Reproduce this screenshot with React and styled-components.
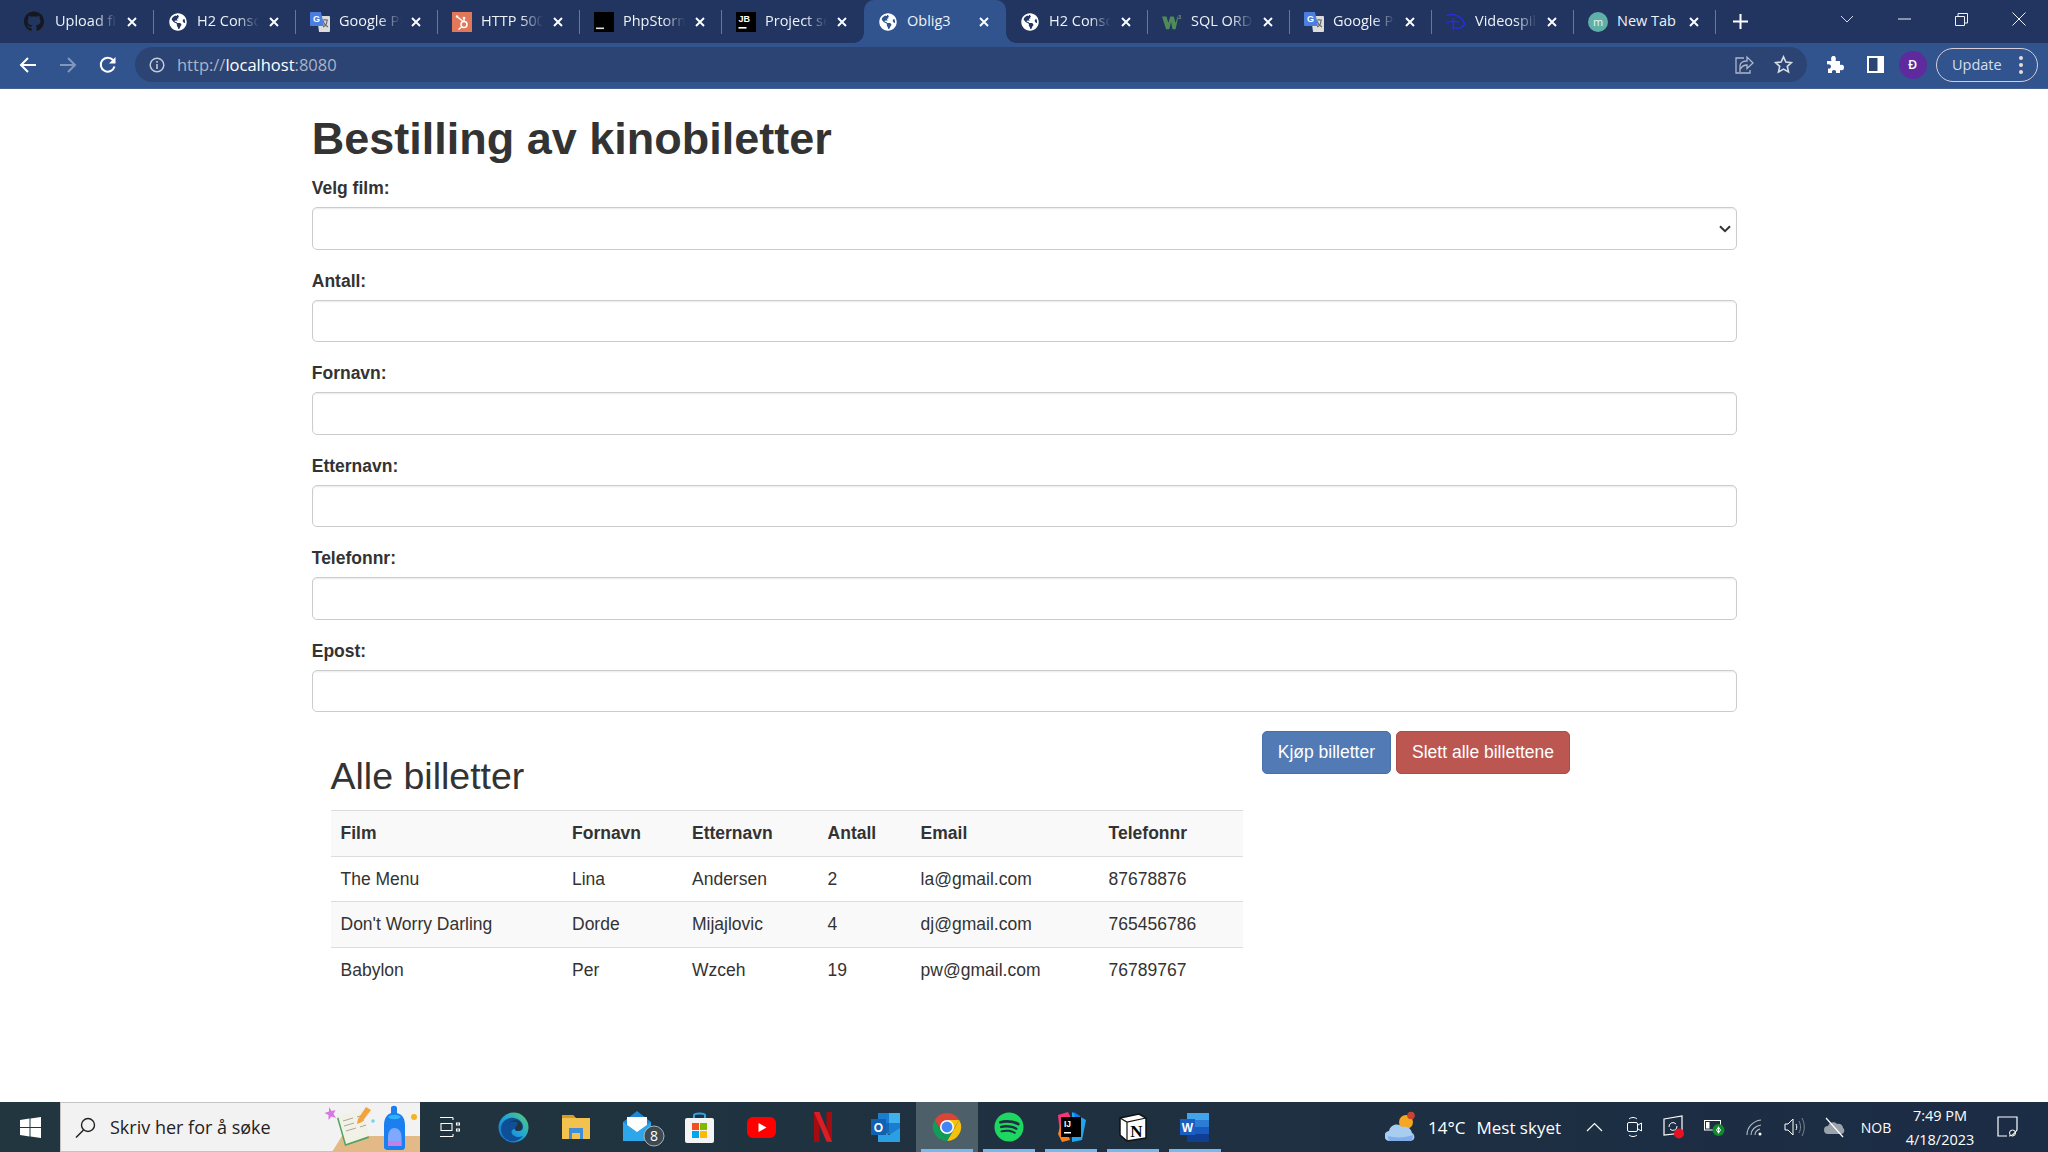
import React from "react";
import styled, { createGlobalStyle } from "styled-components";
import { FaGithub, FaGlobeAmericas, FaSpotify } from "react-icons/fa";

const GlobalStyle = createGlobalStyle`
  html, body {
    margin: 0;
    padding: 0;
    height: 100%;
    background: #fff;
  }
  * {
    box-sizing: border-box;
  }
`;

const uiFont = `"Open Sans", "Noto Sans", sans-serif`;
const pageFont = `"Liberation Sans", Arial, sans-serif`;

const Screen = styled.div`
  width: 2048px;
  height: 1152px;
  display: flex;
  flex-direction: column;
  overflow: hidden;
`;

/* browser chrome */
const TabStrip = styled.div`
  height: 43px;
  flex: none;
  background: #213560;
  display: flex;
  padding-left: 12px;
  font-family: ${uiFont};
`;

const TabItem = styled.div`
  position: relative;
  flex: none;
  width: 142px;
  height: 43px;
  display: flex;
  align-items: center;
  padding: 0 17px 0 ${props => (props.first ? 12 : 14)}px;
  border-radius: 10px 10px 0 0;
  background: ${props => (props.active ? "#31548f" : "transparent")};
  &::after {
    content: "";
    display: ${props => (props.noSep ? "none" : "block")};
    position: absolute;
    right: 0;
    top: 10px;
    height: 24px;
    width: 1px;
    background: #66789c;
  }
`;

const Flare = styled.span`
  position: absolute;
  bottom: 0;
  width: 10px;
  height: 10px;
  ${props => (props.left ? "left: -10px;" : "right: -10px;")}
  background: radial-gradient(circle at ${props => (props.left ? "0 0" : "100% 0")}, transparent 9.5px, #31548f 10px);
`;

const TabIcon = styled.span`
  flex: none;
  width: 20px;
  height: 20px;
  display: flex;
  align-items: center;
  justify-content: center;
  color: #fff;
`;

const TabTitle = styled.span`
  flex: 1;
  min-width: 0;
  margin: 0 10px 2px ${props => (props.first ? 11 : 9)}px;
  font-size: 14.5px;
  color: #eef2f8;
  white-space: nowrap;
  overflow: hidden;
  mask-image: ${props => (props.fade ? "linear-gradient(to right, #000 65%, transparent 100%)" : "none")};
`;

const NewTabButton = styled.div`
  width: 48px;
  display: flex;
  align-items: center;
  justify-content: center;
`;

const WindowControls = styled.div`
  margin-left: auto;
  display: flex;
  align-items: flex-start;
`;

const WindowButton = styled.div`
  width: 57.5px;
  height: 38px;
  display: flex;
  align-items: center;
  justify-content: center;
`;

const Toolbar = styled.div`
  height: 46px;
  flex: none;
  background: #31548f;
  display: flex;
  align-items: center;
  border-bottom: 1px solid #46608f;
  padding-bottom: 2px;
`;

const NavButton = styled.div`
  width: 40px;
  height: 35px;
  flex: none;
  display: flex;
  align-items: center;
  justify-content: center;
`;

const NavGroup = styled.div`
  display: flex;
  padding-left: 8px;
  width: 135px;
  flex: none;
`;

const Omnibox = styled.div`
  flex: none;
  width: 1672px;
  height: 35px;
  border-radius: 18px;
  background: #2c4474;
  display: flex;
  align-items: center;
  padding: 0 4px 0 14px;
`;

const UrlText = styled.div`
  margin-left: 12px;
  font-family: ${uiFont};
  font-size: 16.5px;
  color: #a9b4c8;
  flex: 1;
  b {
    font-weight: 400;
    color: #fff;
  }
`;

const OmniIcon = styled.span`
  width: 39px;
  display: flex;
  justify-content: center;
`;

const ToolIcon = styled.div`
  width: ${props => props.w}px;
  flex: none;
  display: flex;
  justify-content: center;
  align-items: center;
`;

const Avatar = styled.div`
  width: 28px;
  height: 28px;
  border-radius: 50%;
  background: #5f2a9e;
  color: #fff;
  font-family: ${uiFont};
  font-size: 12.5px;
  font-weight: 600;
  display: flex;
  align-items: center;
  justify-content: center;
`;

const UpdatePill = styled.div`
  width: 102px;
  height: 34px;
  flex: none;
  border: 1.5px solid #d8cdd6;
  border-radius: 17px;
  display: flex;
  align-items: center;
  justify-content: space-between;
  padding: 0 14px 0 15px;
  color: #d9dfe9;
  font-family: ${uiFont};
  font-size: 14.5px;
`;

const Kebab = styled.span`
  display: flex;
  flex-direction: column;
  gap: 3px;
  span {
    width: 4px;
    height: 4px;
    border-radius: 50%;
    background: #eadbd8;
  }
`;

/* page */
const Page = styled.main`
  flex: 1;
  min-height: 0;
  background: #fff;
  font-family: ${pageFont};
  font-size: 17.5px;
  line-height: 25px;
  color: #333;
`;

const Container = styled.div`
  width: 1462.5px;
  margin: 0 auto;
  padding: 0 18.5px 0 19px;
`;

const Title = styled.h1`
  margin: 25px 0 12.5px;
  font-size: 45px;
  line-height: 49.5px;
  font-weight: 700;
`;

const FormGroup = styled.div`
  margin-bottom: 18.75px;
`;

const Label = styled.label`
  display: block;
  margin-bottom: 6.25px;
  font-weight: 700;
`;

const TextInput = styled.input`
  display: block;
  width: 100%;
  height: 42.5px;
  padding: 7.5px 15px;
  font: inherit;
  color: #555;
  background: #fff;
  border: 1.25px solid #ccc;
  border-radius: 5px;
  box-shadow: inset 0 1.25px 1.25px rgba(0, 0, 0, 0.075);
`;

const SelectWrap = styled.div`
  position: relative;
  svg {
    position: absolute;
    right: 6px;
    top: 18px;
    pointer-events: none;
  }
`;

const FilmSelect = styled(TextInput).attrs({ as: "select" })`
  appearance: none;
  padding: 7.5px 10px;
`;

const Lower = styled.div`
  display: flex;
  align-items: flex-start;
`;

const TableColumn = styled.section`
  width: 950px;
  flex: none;
  padding: 0 18.75px;
`;

const SubTitle = styled.h2`
  margin: 25px 0 12.5px;
  font-size: 37.5px;
  line-height: 41.25px;
  font-weight: 400;
`;

const Tickets = styled.table`
  width: 100%;
  table-layout: fixed;
  border-collapse: collapse;
  border-spacing: 0;
`;

const TicketCol = styled.col`
  width: ${props => props.w}px;
`;

const Row = styled.tr`
  background: ${props => (props.striped ? "#f9f9f9" : "#fff")};
`;

const HeadCell = styled.th`
  padding: 10px 10px 9.75px;
  text-align: left;
  font-weight: 700;
  border-top: 1.25px solid #ddd;
  border-bottom: 1.25px solid #ddd;
`;

const Cell = styled.td`
  padding: 10px 10px 9.75px;
  border-top: ${props => (props.first ? "0" : "1.25px solid #ddd")};
`;

const Actions = styled.div`
  display: flex;
  gap: 5px;
`;

const Button = styled.button`
  height: 42.5px;
  padding: 7.5px 15px;
  font: inherit;
  color: #fff;
  border: 1.25px solid ${props => (props.danger ? "#ad4d48" : "#4a70a8")};
  border-radius: 5px;
  background: ${props => (props.danger ? "#bb5650" : "#527ab5")};
`;

/* windows taskbar */
const Taskbar = styled.footer`
  height: 50px;
  flex: none;
  display: flex;
  background: linear-gradient(to right, #21363f 0%, #1f3140 50%, #1b2c45 100%);
  font-family: ${uiFont};
  color: #fff;
`;

const StartButton = styled.div`
  width: 60px;
  flex: none;
  display: flex;
  align-items: center;
  justify-content: center;
`;

const SearchBox = styled.div`
  width: 360px;
  margin-right: 1px;
  flex: none;
  display: flex;
  align-items: center;
  background: #f2f2f2;
  border-top: 1.5px solid #c4c4c4;
  border-left: 1.5px solid #c4c4c4;
  border-bottom: 1px solid #c4c4c4;
  padding-left: 14px;
  color: #222;
  font-size: 18px;
`;

const SearchText = styled.span`
  margin-left: 14px;
  flex: 1;
`;

const TaskSlot = styled.div`
  position: relative;
  width: 61.9px;
  flex: none;
  display: flex;
  align-items: center;
  justify-content: center;
  background: ${props => (props.current ? "#4d5f68" : "transparent")};
  &::after {
    content: "";
    display: ${props => (props.running ? "block" : "none")};
    position: absolute;
    left: 5px;
    right: 5px;
    bottom: 0;
    height: 3px;
    background: #76b9ed;
  }
`;

const Tray = styled.div`
  margin-left: auto;
  display: flex;
  padding-right: 16px;
`;

const Weather = styled.div`
  width: 191px;
  display: flex;
  align-items: center;
  font-size: 17px;
  gap: 11px;
  padding-right: 10px;
`;

const TraySlot = styled.div`
  width: ${props => props.w || 40}px;
  display: flex;
  align-items: center;
  justify-content: center;
  font-size: 14px;
`;

const Clock = styled.div`
  width: 84px;
  display: flex;
  flex-direction: column;
  align-items: center;
  justify-content: center;
  gap: 5px;
  font-size: 14.5px;
  line-height: 19px;
`;

const CloseX = () => (
  <svg width="10" height="10" viewBox="0 0 10 10" style={{ flex: "none" }}>
    <path d="M1 1l8 8M9 1l-8 8" stroke="#fff" strokeWidth="1.9" />
  </svg>
);

const TranslateIcon = () => (
  <svg width="20" height="22" viewBox="0 0 20 22">
    <path d="M7 5h12a1 1 0 0 1 1 1v14a1 1 0 0 1-1 1H9z" fill="#dcdcdc" />
    <path d="M12 9h6M15 8v1M13 16c3-1 4-4 4-7M13 10c1 3 3 5 5 6" stroke="#666" strokeWidth="1.1" fill="none" />
    <path d="M1 1h10l3 14H1a1 1 0 0 1-1-1V2a1 1 0 0 1 1-1z" fill="#4a7fe0" />
    <text x="3" y="11" fontSize="9" fontWeight="700" fill="#fff" fontFamily="Liberation Sans">G</text>
  </svg>
);

const HubspotIcon = () => (
  <svg width="20" height="20" viewBox="0 0 20 20">
    <rect width="20" height="20" fill="#e2785a" />
    <path d="M12 7v3M5.5 5l5 4" stroke="#fff" strokeWidth="1.4" />
    <circle cx="12" cy="12.5" r="3" fill="none" stroke="#fff" strokeWidth="1.5" />
    <circle cx="12" cy="6" r="1.3" fill="#fff" />
    <circle cx="5" cy="4.5" r="1.2" fill="#fff" />
    <path d="M9.5 15l-3 2.5" stroke="#fff" strokeWidth="1.4" />
  </svg>
);

const TerminalIcon = () => (
  <svg width="20" height="20" viewBox="0 0 20 20">
    <rect width="20" height="20" fill="#000" />
    <rect x="2" y="15.5" width="8" height="1.6" fill="#ddd" />
  </svg>
);

const JetBrainsIcon = () => (
  <svg width="20" height="20" viewBox="0 0 20 20">
    <rect width="20" height="20" fill="#000" />
    <text x="2.5" y="10" fontSize="9" fontWeight="700" fill="#fff" fontFamily="Liberation Sans">JB</text>
    <rect x="2.5" y="15" width="8" height="1.6" fill="#fff" />
  </svg>
);

const W3Icon = () => (
  <svg width="22" height="18" viewBox="0 0 22 18">
    <path d="M0 3h5l2 7 2-7h4l2 7 2-7h1l-3 14h-3.5L10 9l-2 8H4.500z" fill="#4f8a58" />
    <text x="17.500" y="6" fontSize="6" fill="#8fb596" fontFamily="Liberation Sans">3</text>
  </svg>
);

const DisneyIcon = () => (
  <svg width="22" height="20" viewBox="0 0 22 20">
    <path d="M1 3c7-3 17 1 19 8 1 5-7 7-12 5M8 6v13M1 11c3-2 8-2 13-1" fill="none" stroke="#2b2bf0" strokeWidth="1.5" />
  </svg>
);

const NewTabIcon = () => (
  <svg width="20" height="20" viewBox="0 0 20 20">
    <circle cx="10" cy="10" r="10" fill="#5fb0a8" />
    <text x="10" y="13.500" textAnchor="middle" fontSize="11" fill="#e9f5f4" fontFamily="Open Sans">m</text>
  </svg>
);

const tabs = [
  { title: "Upload files", icon: <FaGithub size={21} color="#16181f" />, fade: true, first: true },
  { title: "H2 Console", icon: <FaGlobeAmericas size={18} />, fade: true },
  { title: "Google Presentasjon", icon: <TranslateIcon />, fade: true },
  { title: "HTTP 500 error", icon: <HubspotIcon />, fade: true },
  { title: "PhpStorm 2022", icon: <TerminalIcon />, fade: true },
  { title: "Project setup", icon: <JetBrainsIcon />, fade: true, noSep: true },
  { title: "Oblig3", icon: <FaGlobeAmericas size={18} />, active: true, noSep: true },
  { title: "H2 Console", icon: <FaGlobeAmericas size={18} />, fade: true },
  { title: "SQL ORDER BY", icon: <W3Icon />, fade: true },
  { title: "Google Presentasjon", icon: <TranslateIcon />, fade: true },
  { title: "Videospill", icon: <DisneyIcon />, fade: true },
  { title: "New Tab", icon: <NewTabIcon /> }
];

const BackArrow = ({ color }) => (
  <svg width="18" height="18" viewBox="0 0 18 18">
    <path d="M17 9H2M9 2L2 9l7 7" fill="none" stroke={color} strokeWidth="2" />
  </svg>
);

const ForwardArrow = ({ color }) => (
  <svg width="18" height="18" viewBox="0 0 18 18">
    <path d="M1 9h15M9 2l7 7-7 7" fill="none" stroke={color} strokeWidth="2" />
  </svg>
);

const ReloadIcon = () => (
  <svg width="18" height="18" viewBox="0 0 18 18">
    <path d="M15.500 10.500A7 7 0 1 1 14 4" fill="none" stroke="#fff" strokeWidth="2" />
    <path d="M16.500 1v6.500H10z" fill="#fff" />
  </svg>
);

const InfoIcon = () => (
  <svg width="16" height="16" viewBox="0 0 16 16">
    <circle cx="8" cy="8" r="6.800" fill="none" stroke="#c3cad8" strokeWidth="1.500" />
    <path d="M8 7v5M8 4v1.800" stroke="#c3cad8" strokeWidth="1.600" />
  </svg>
);

const ShareIcon = () => (
  <svg width="19" height="19" viewBox="0 0 19 19">
    <path d="M5 17V11c0-3 3-5 7-5V2l6 6-6 5.500V10c-3 0-5 1-6.500 4" fill="none" stroke="#aeb7c9" strokeWidth="1.300" />
    <path d="M9 3H1v15h14v-3" fill="none" stroke="#aeb7c9" strokeWidth="1.300" />
  </svg>
);

const StarIcon = () => (
  <svg width="19" height="19" viewBox="0 0 19 19">
    <path d="M9.500 1.800l2.400 5.200 5.600.6-4.200 3.800 1.200 5.600-5-2.900-5 2.900 1.200-5.600L1.500 7.600l5.600-.6z" fill="none" stroke="#d7dce6" strokeWidth="1.600" />
  </svg>
);

const PuzzleIcon = () => (
  <svg width="19" height="19" viewBox="0 0 19 19">
    <path d="M2 6h4.500C5.500 3 6.500 1 8.500 1s3 2 2 5H15v4c3-1 4 .5 4 2.500S18 16 15 15v3h-4c.5-2-.5-3-2-3s-2.500 1-2 3H3v-4.500c2 .5 3-.5 3-2s-1.500-2.500-4-2z" fill="#fff" />
  </svg>
);

const SidePanelIcon = () => (
  <svg width="17" height="17" viewBox="0 0 17 17">
    <rect width="17" height="17" fill="#fff" />
    <rect x="2" y="2" width="8.500" height="13" fill="#2c4474" />
  </svg>
);

const SelectChevron = () => (
  <svg width="12" height="8" viewBox="0 0 12 8">
    <path d="M1 1.200l5 5 5-5" fill="none" stroke="#333" strokeWidth="2" />
  </svg>
);

const WindowsLogo = () => (
  <svg width="21" height="21" viewBox="0 0 21 21">
    <path d="M0 3l9.500-1.400v8.400H0zM10.500 1.400L21 0v10H10.500zM0 11h9.500v8.400L0 18zM10.500 11H21v10l-10.500-1.500z" fill="#fff" />
  </svg>
);

const Magnifier = () => (
  <svg width="21" height="21" viewBox="0 0 21 21" style={{ flex: "none" }}>
    <circle cx="13" cy="8" r="6.500" fill="none" stroke="#222" strokeWidth="1.400" />
    <path d="M8.500 13L1 20.500" stroke="#222" strokeWidth="1.500" />
  </svg>
);

const SearchArt = () => (
  <svg width="100" height="49" viewBox="0 0 100 49" style={{ flex: "none" }}>
    <path d="M12 49l10-16h78v16z" fill="#e3b988" />
    <path d="M9 4l2.500 4 4-1-2 4 2.500 4-4.500-1.500-3 3.500v-5l-4-2 4.500-1.500z" fill="#d977e0" />
    <path d="M17 15l24-7 8 27-24 8z" fill="#4fa35e" />
    <path d="M18 13l23-6 8 26-23 8z" fill="#f1f1e6" />
    <path d="M23 18l10-3M24 23l10-3M26 28l10-3M37 14l6-2M38 19l6-2M40 24l6-2" stroke="#a8a8a0" strokeWidth="1" />
    <path d="M38 16l8-12 5 3-9 12-5 2z" fill="#f2a33c" />
    <circle cx="53" cy="18" r="1.800" fill="#6fd6ee" />
    <path d="M64 44V22c0-9 5-11 7-12V5c0-3 6-3 6 0v5c3 1 8 3 8 12v22c0 3-3 3-4 3H68c-1 0-4 0-4-3z" fill="#1c7ff0" />
    <path d="M68 14c3-3 10-3 13 0-3 3-10 3-13 0z" fill="#2fb4ff" />
    <path d="M68 34c0-6 3-9 6.500-9s7 3 7 9v9H68z" fill="#7fa8ff" />
    <path d="M68 38h13.500v5H68z" fill="#c27fe8" />
    <circle cx="94" cy="14" r="3" fill="#f5b223" />
  </svg>
);

const TaskViewIcon = () => (
  <svg width="20" height="20" viewBox="0 0 20 20" style={{ marginRight: 4 }}>
    <path d="M0 .5h13M13 3V.5M0 19.500h13M13 17v2.500M1 6.500h11v7H1zM16.500 6h3v2h-3zM16.500 12h3v2h-3z" fill="none" stroke="#fff" strokeWidth="1.100" />
  </svg>
);

const EdgeIcon = () => (
  <svg width="31" height="31" viewBox="0 0 31 31">
    <defs>
      <linearGradient id="edgeA" x1="0" y1="1" x2="1" y2="0">
        <stop offset="0" stopColor="#1266c4" />
        <stop offset="0.5" stopColor="#1fa3d8" />
        <stop offset="1" stopColor="#5ad06b" />
      </linearGradient>
    </defs>
    <circle cx="15.500" cy="15.500" r="15" fill="url(#edgeA)" />
    <path d="M3 17C3 9 10 5 16 6c6 1 9 5 9 9 0 3-2 4-5 4-2 0-3-1-3-2-3 0-5 3-2 6 2 2 6 3 10 1-3 4-8 6-13 5C6 27 3 22 3 17z" fill="#0e4f97" />
    <path d="M24 16c0 2-2 3-4 3-2 0-3-1-3-2 0-2 3-4 3-6-2-2-7-2-10 1 3-4 9-5 12-2 2 1 2 4 2 6z" fill="#21343f" />
  </svg>
);

const FolderIcon = () => (
  <svg width="28" height="28" viewBox="0 0 28 28">
    <path d="M0 2h11l3 3h14v21H0z" fill="#f2c14e" />
    <path d="M0 2h11l2 3H0z" fill="#d89b22" />
    <path d="M7 26V15h14v11h-3v-6h-8v6z" fill="#3e8ed8" />
    <rect x="10" y="20" width="8" height="6" fill="#f2c14e" />
  </svg>
);

const MailIcon = () => (
  <svg width="44" height="38" viewBox="0 0 44 38" style={{ marginTop: 4, marginLeft: 14 }}>
    <path d="M0 12L14 1l14 11v19H0z" fill="#1f87d8" />
    <path d="M4 7h20v12l-10 6-10-6z" fill="#fff" />
    <path d="M0 12l14 10 14-10v19H0z" fill="#2ea7ea" />
    <circle cx="31" cy="26" r="10" fill="#3d4a52" stroke="#a9b1b6" strokeWidth="1" />
    <text x="31" y="31" textAnchor="middle" fontSize="14" fill="#fff" fontFamily="Open Sans">8</text>
  </svg>
);

const StoreIcon = () => (
  <svg width="29" height="31" viewBox="0 0 29 31">
    <path d="M9 6V3c0-2 11-2 11 0v3" fill="none" stroke="#2aa7e8" strokeWidth="2" />
    <rect y="6" width="29" height="25" rx="2" fill="#f4f4f4" />
    <rect x="7" y="11" width="7" height="7" fill="#f25022" />
    <rect x="15" y="11" width="7" height="7" fill="#7fba00" />
    <rect x="7" y="19" width="7" height="7" fill="#00a4ef" />
    <rect x="15" y="19" width="7" height="7" fill="#ffb900" />
  </svg>
);

const YoutubeIcon = () => (
  <svg width="29" height="21" viewBox="0 0 29 21">
    <rect width="29" height="21" rx="6" fill="#f00" />
    <path d="M11.500 6l8 4.500-8 4.500z" fill="#fff" />
  </svg>
);

const NetflixIcon = () => (
  <svg width="18" height="30" viewBox="0 0 18 30">
    <path d="M0 0h5.500v30L0 30z" fill="#a50c12" />
    <path d="M12.500 0H18v30h-5.500z" fill="#a50c12" />
    <path d="M0 0h5.500L18 30l-5.500-.5z" fill="#d81f26" />
  </svg>
);

const OutlookIcon = () => (
  <svg width="29" height="29" viewBox="0 0 29 29">
    <rect x="7" y="0" width="22" height="21" fill="#1a7dd0" />
    <rect x="18" y="0" width="11" height="10" fill="#3fb2ee" />
    <rect x="7" y="10" width="11" height="10" fill="#0f68b8" />
    <path d="M7 15l11 7 11-7v14H7z" fill="#2a9fe3" />
    <rect y="6" width="15" height="16" fill="#1260ae" />
    <text x="7.500" y="19" textAnchor="middle" fontSize="12" fontWeight="700" fill="#fff" fontFamily="Liberation Sans">O</text>
  </svg>
);

const ChromeIcon = () => (
  <svg width="30" height="30" viewBox="0 0 32 32">
    <path d="M3 8.500A15 15 0 0 1 29 8.500H16z" fill="#db4437" />
    <path d="M29 8.500A15 15 0 0 1 16 31l6-10z" fill="#f4c20d" />
    <path d="M16 31A15 15 0 0 1 3 8.500L10 21z" fill="#0f9d58" />
    <path d="M16 8.500H29L22 20z" fill="#f4c20d" />
    <path d="M10 20L3 8.500h13z" fill="#db4437" />
    <path d="M10 20l6 11 6-11z" fill="#0f9d58" />
    <circle cx="16" cy="16" r="7.500" fill="#fff" />
    <circle cx="16" cy="16" r="5.800" fill="#4285f4" />
  </svg>
);

const IntellijIcon = () => (
  <svg width="30" height="30" viewBox="0 0 30 30">
    <path d="M2 3l10-3 4 8-12 14z" fill="#f5367b" />
    <path d="M16 0l14 8-4 20-10 2z" fill="#1ea7f0" />
    <path d="M2 22L6 8l8 20-8 2z" fill="#fc801d" />
    <path d="M18 0l6 4-4 6z" fill="#087cfa" />
    <rect x="5" y="5" width="20" height="20" fill="#000" />
    <text x="8" y="15" fontSize="8.500" fontWeight="700" fill="#fff" fontFamily="Liberation Sans">IJ</text>
    <rect x="8" y="20" width="7" height="1.500" fill="#fff" />
  </svg>
);

const NotionIcon = () => (
  <svg width="28" height="29" viewBox="0 0 28 29">
    <path d="M1 5L20 1l7 4v20l-19 3-7-6z" fill="#fff" stroke="#111" strokeWidth="1.500" />
    <path d="M1 5l7 4 19-4M8 9v19" fill="none" stroke="#111" strokeWidth="1.200" />
    <text x="17.500" y="24" textAnchor="middle" fontSize="17" fontWeight="700" fill="#000" fontFamily="Liberation Serif">N</text>
  </svg>
);

const WordIcon = () => (
  <svg width="29" height="29" viewBox="0 0 29 29">
    <rect x="7" y="0" width="22" height="7.500" fill="#41a5ee" />
    <rect x="7" y="7" width="22" height="7.500" fill="#2b7cd3" />
    <rect x="7" y="14" width="22" height="7.500" fill="#185abd" />
    <rect x="7" y="21" width="22" height="8" fill="#103f91" />
    <rect y="6" width="15" height="16" fill="#1a5ec0" />
    <text x="7.500" y="19" textAnchor="middle" fontSize="12" fontWeight="700" fill="#fff" fontFamily="Liberation Sans">W</text>
  </svg>
);

const WeatherIcon = () => (
  <svg width="32" height="32" viewBox="0 0 32 32" style={{ flex: "none", marginLeft: 2 }}>
    <circle cx="21" cy="11" r="7" fill="#f5a623" />
    <circle cx="26" cy="4.500" r="3.800" fill="#c9432e" />
    <path d="M5 30a5 5 0 0 1-1-10c1-6 9-9 13-4 5-1 9 1 10 6 3 1 4 8-2 8z" fill="#a9cdf0" />
    <path d="M3 25c6 2 18 2 25-1 0 3-1 6-3 6H5c-1 0-2-2-2-5z" fill="#7faeea" />
  </svg>
);

const ChevronUp = () => (
  <svg width="17" height="10" viewBox="0 0 17 10">
    <path d="M1 9l7.500-7.500L16 9" fill="none" stroke="#fff" strokeWidth="1.200" />
  </svg>
);

const MeetIcon = () => (
  <svg width="15" height="22" viewBox="0 0 15 22">
    <path d="M2 3c2-2 6-2 8 0M2 19c2 2 6 2 8 0" fill="none" stroke="#fff" strokeWidth="1" />
    <rect x="0.500" y="6.500" width="10" height="9" rx="1.500" fill="none" stroke="#fff" />
    <path d="M11 9l3.500-2v8L11 13" fill="none" stroke="#fff" />
  </svg>
);

const SyncIcon = () => (
  <svg width="22" height="24" viewBox="0 0 22 24">
    <path d="M1 4l18-3v17L1 20z" fill="none" stroke="#fff" strokeWidth="1.200" />
    <path d="M6 12a4 4 0 0 1 7-3M14 11a4 4 0 0 1-7 3" fill="none" stroke="#fff" />
    <circle cx="16" cy="18.500" r="5" fill="#e81123" />
  </svg>
);

const BatteryIcon = () => (
  <svg width="21" height="20" viewBox="0 0 21 20">
    <rect x="0.500" y="3.500" width="16" height="9.500" fill="none" stroke="#fff" />
    <rect x="2" y="5" width="3.500" height="6.500" fill="#fff" />
    <circle cx="14.500" cy="13" r="6" fill="#0f8a2c" />
    <path d="M14.500 9.500v7M12.500 13l2-3 2 3-2 3z" fill="none" stroke="#fff" />
  </svg>
);

const WifiIcon = () => (
  <svg width="17" height="17" viewBox="0 0 17 17">
    <path d="M1 16C1 8 7 2 15 1M5 16c0-5 4-9 10-10M9 16c0-3 2-5 5-6" fill="none" stroke="#b4bcc4" strokeWidth="1.100" />
    <circle cx="14" cy="15" r="1.500" fill="#fff" />
  </svg>
);

const SpeakerIcon = () => (
  <svg width="21" height="22" viewBox="0 0 21 22">
    <path d="M1 8h3l5-5v16l-5-5H1z" fill="none" stroke="#fff" />
    <path d="M12 8c1 2 1 4 0 6" fill="none" stroke="#fff" />
    <path d="M15 5c2 4 2 8 0 12M18 2c3 6 3 12 0 18" fill="none" stroke="#7e8893" />
  </svg>
);

const OfflineCloud = () => (
  <svg width="21" height="21" viewBox="0 0 21 21">
    <path d="M4 17a4 4 0 0 1 0-8c1-4 7-5 9-2 3-1 6 1 6 4 2 1 2 6-2 6z" fill="#9aa3ab" />
    <path d="M2 1l17 19" stroke="#fff" strokeWidth="1.200" />
  </svg>
);

const NotifyIcon = () => (
  <svg width="21" height="22" viewBox="0 0 21 22">
    <path d="M10 20H1V1h19v13c-2 3-5 6-8 6" fill="none" stroke="#fff" strokeWidth="1.200" />
    <circle cx="15.500" cy="17" r="3" fill="none" stroke="#fff" />
  </svg>
);

const columns = [231.5, 120, 135.6, 93, 188, 144.4];

const tickets = [
  ["The Menu", "Lina", "Andersen", "2", "la@gmail.com", "87678876"],
  ["Don't Worry Darling", "Dorde", "Mijajlovic", "4", "dj@gmail.com", "765456786"],
  ["Babylon", "Per", "Wzceh", "19", "pw@gmail.com", "76789767"]
];

const fields = ["Antall:", "Fornavn:", "Etternavn:", "Telefonnr:", "Epost:"];

const taskIcons = [
  { icon: <TaskViewIcon /> },
  { icon: <EdgeIcon /> },
  { icon: <FolderIcon /> },
  { icon: <MailIcon /> },
  { icon: <StoreIcon /> },
  { icon: <YoutubeIcon /> },
  { icon: <NetflixIcon /> },
  { icon: <OutlookIcon /> },
  { icon: <ChromeIcon />, running: true, current: true },
  { icon: <FaSpotify size={30} color="#1ed760" />, running: true },
  { icon: <IntellijIcon />, running: true },
  { icon: <NotionIcon />, running: true },
  { icon: <WordIcon />, running: true }
];

function App() {
  return (
    <Screen>
      <GlobalStyle />
      <TabStrip>
        {tabs.map(tab => (
          <TabItem key={tab.title + tab.active} active={tab.active} noSep={tab.noSep} first={tab.first}>
            {tab.active && <Flare left />}
            {tab.active && <Flare />}
            <TabIcon>{tab.icon}</TabIcon>
            <TabTitle fade={tab.fade} first={tab.first}>{tab.title}</TabTitle>
            <CloseX />
          </TabItem>
        ))}
        <NewTabButton>
          <svg width="15" height="15" viewBox="0 0 15 15">
            <path d="M7.500 0v15M0 7.500h15" stroke="#fff" strokeWidth="2" />
          </svg>
        </NewTabButton>
        <WindowControls>
          <WindowButton>
            <svg width="14" height="8" viewBox="0 0 14 8">
              <path d="M1 1l6 6 6-6" fill="none" stroke="#d5dbe6" strokeWidth="1" />
            </svg>
          </WindowButton>
          <WindowButton>
            <svg width="13" height="2" viewBox="0 0 13 2">
              <path d="M0 1h13" stroke="#eef1f6" strokeWidth="1" />
            </svg>
          </WindowButton>
          <WindowButton>
            <svg width="13" height="13" viewBox="0 0 13 13">
              <path d="M0.500 3.500h9v9h-9zM3 3.500V.5h9.500V10H9.500" fill="none" stroke="#eef1f6" strokeWidth="1" />
            </svg>
          </WindowButton>
          <WindowButton>
            <svg width="14" height="14" viewBox="0 0 14 14">
              <path d="M.5.500l13 13M13.500.500l-13 13" stroke="#eef1f6" strokeWidth="1" />
            </svg>
          </WindowButton>
        </WindowControls>
      </TabStrip>

      <Toolbar>
        <NavGroup>
          <NavButton><BackArrow color="#fff" /></NavButton>
          <NavButton><ForwardArrow color="#8397bd" /></NavButton>
          <NavButton><ReloadIcon /></NavButton>
        </NavGroup>
        <Omnibox>
          <InfoIcon />
          <UrlText>http://<b>localhost</b>:8080</UrlText>
          <OmniIcon><ShareIcon /></OmniIcon>
          <OmniIcon><StarIcon /></OmniIcon>
        </Omnibox>
        <ToolIcon w={54}><PuzzleIcon /></ToolIcon>
        <ToolIcon w={28}><SidePanelIcon /></ToolIcon>
        <ToolIcon w={47}><Avatar>Đ</Avatar></ToolIcon>
        <UpdatePill>
          Update
          <Kebab><span /><span /><span /></Kebab>
        </UpdatePill>
      </Toolbar>

      <Page>
        <Container>
          <Title>Bestilling av kinobiletter</Title>
          <FormGroup>
            <Label>Velg film:</Label>
            <SelectWrap>
              <FilmSelect>
                <option></option>
              </FilmSelect>
              <SelectChevron />
            </SelectWrap>
          </FormGroup>
          {fields.map(field => (
            <FormGroup key={field}>
              <Label>{field}</Label>
              <TextInput type="text" />
            </FormGroup>
          ))}
          <Lower>
            <TableColumn>
              <SubTitle>Alle billetter</SubTitle>
              <Tickets>
                <colgroup>
                  {columns.map((w, i) => (
                    <TicketCol key={i} w={w} />
                  ))}
                </colgroup>
                <thead>
                  <Row striped>
                    {["Film", "Fornavn", "Etternavn", "Antall", "Email", "Telefonnr"].map(name => (
                      <HeadCell key={name}>{name}</HeadCell>
                    ))}
                  </Row>
                </thead>
                <tbody>
                  {tickets.map((ticket, i) => (
                    <Row key={ticket[0]} striped={i === 1}>
                      {ticket.map(value => (
                        <Cell key={value} first={i === 0}>{value}</Cell>
                      ))}
                    </Row>
                  ))}
                </tbody>
              </Tickets>
            </TableColumn>
            <Actions>
              <Button>Kjøp billetter</Button>
              <Button danger>Slett alle billettene</Button>
            </Actions>
          </Lower>
        </Container>
      </Page>

      <Taskbar>
        <StartButton><WindowsLogo /></StartButton>
        <SearchBox>
          <Magnifier />
          <SearchText>Skriv her for å søke</SearchText>
          <SearchArt />
        </SearchBox>
        {taskIcons.map((task, i) => (
          <TaskSlot key={i} running={task.running} current={task.current}>
            {task.icon}
          </TaskSlot>
        ))}
        <Tray>
          <Weather>
            <WeatherIcon />
            <span>14°C</span>
            <span>Mest skyet</span>
          </Weather>
          <TraySlot><ChevronUp /></TraySlot>
          <TraySlot><MeetIcon /></TraySlot>
          <TraySlot><SyncIcon /></TraySlot>
          <TraySlot><BatteryIcon /></TraySlot>
          <TraySlot><WifiIcon /></TraySlot>
          <TraySlot><SpeakerIcon /></TraySlot>
          <TraySlot><OfflineCloud /></TraySlot>
          <TraySlot w={44}>NOB</TraySlot>
          <Clock>
            <span>7:49 PM</span>
            <span>4/18/2023</span>
          </Clock>
          <TraySlot w={50}><NotifyIcon /></TraySlot>
        </Tray>
      </Taskbar>
    </Screen>
  );
}

export default App;
